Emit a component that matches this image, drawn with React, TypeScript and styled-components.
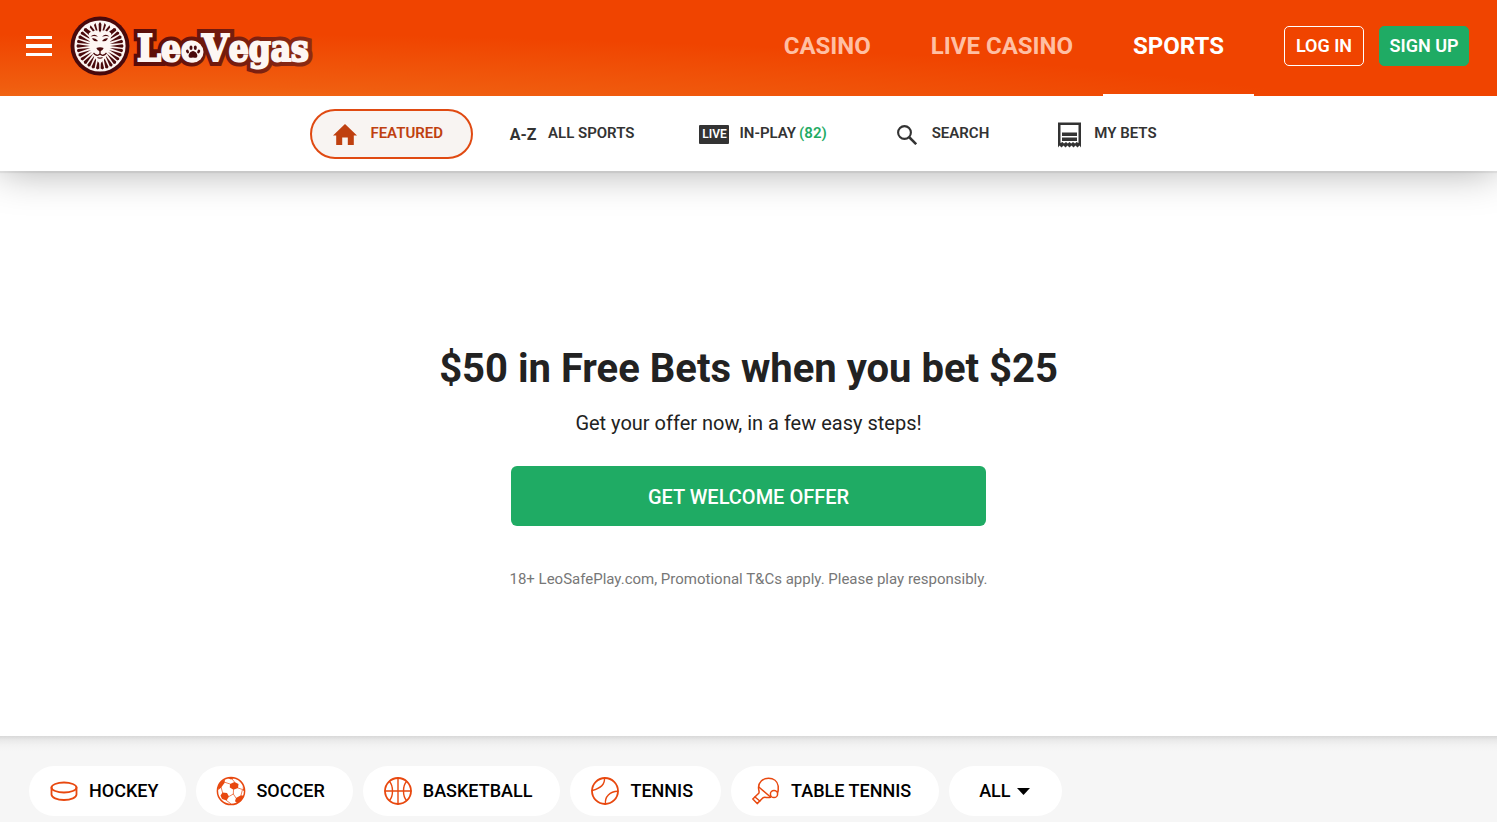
import React from "react";
import styled, { createGlobalStyle } from "styled-components";

const GlobalStyle = createGlobalStyle`
  *, *::before, *::after { box-sizing: border-box; }
  body {
    margin: 0;
    background: #f6f6f6;
    color: #222;
    font-family: Roboto, "Liberation Sans", sans-serif;
  }
  button { font-family: inherit; cursor: pointer; }
  a { color: inherit; text-decoration: none; }
  svg { display: block; flex: none; }
`;

const Header = styled.header`
  display: flex;
  align-items: stretch;
  height: 96px;
  padding: 0 28px 0 26px;
  background:
    radial-gradient(ellipse 85% 110% at 10% 145%, #f48a26 0%, rgba(240, 98, 18, 0.85) 50%, rgba(240, 68, 0, 0) 100%),
    #f04400;
`;

const Brand = styled.div`
  display: flex;
  align-items: center;
  gap: 18px;
  margin-right: auto;
  padding-bottom: 4px;
`;

const MenuButton = styled.button`
  padding: 0;
  border: 0;
  background: none;
  color: #fff;
`;

const MainNav = styled.nav`
  display: flex;
`;

const MainLink = styled.a<{ $active?: boolean }>`
  display: flex;
  align-items: center;
  padding: 0 30px 2px;
  border-bottom: 2px solid ${(p) => (p.$active ? "#fff" : "transparent")};
  color: ${(p) => (p.$active ? "#fff" : "#ffbfa3")};
  font-size: 24px;
  font-weight: 700;
`;

const Account = styled.div`
  display: flex;
  align-items: center;
  gap: 15px;
  margin-left: 30px;
  padding-bottom: 4px;
`;

const AccountButton = styled.button<{ $filled?: boolean }>`
  width: ${(p) => (p.$filled ? 90 : 80)}px;
  height: 40px;
  padding: 0 0 2px;
  border: 1px solid ${(p) => (p.$filled ? "#1fab64" : "#fff")};
  border-radius: 5px;
  background: ${(p) => (p.$filled ? "#1fab64" : "transparent")};
  color: #fff;
  font-size: 18px;
  font-weight: 600;
  white-space: nowrap;
`;

const SubNav = styled.nav`
  position: relative;
  display: flex;
  justify-content: center;
  align-items: center;
  gap: 15px;
  height: 75px;
  background: #fff;
  box-shadow: 0 2px 1px rgba(0, 0, 0, 0.06), 0 0 40px rgba(0, 0, 0, 0.34);
  clip-path: inset(0 0 -60px 0);
`;

const SubLink = styled.a<{ $active?: boolean }>`
  display: flex;
  align-items: center;
  gap: 10px;
  height: 50px;
  padding: 0 28px 0 18px;
  border: 2px solid ${(p) => (p.$active ? "#e04a12" : "transparent")};
  border-radius: 25px;
  background: ${(p) => (p.$active ? "#f8f4f2" : "transparent")};
  color: ${(p) => (p.$active ? "#bf4010" : "#333")};
  font-size: 15px;
  font-weight: 600;
`;

const SubLabel = styled.span`
  padding-bottom: 2px;
`;

const Count = styled.span`
  margin-left: 3px;
  color: #1fab64;
`;

const IconBox = styled.span`
  display: flex;
  align-items: center;
  justify-content: center;
  width: 30px;
  padding-top: 2px;
`;

const TextIcon = styled.span`
  font-size: 16px;
  font-weight: 700;
  line-height: 20px;
  white-space: nowrap;
`;

const LiveIcon = styled.span`
  width: 30px;
  border-radius: 1px;
  background: #333;
  color: #fff;
  font-size: 12px;
  font-weight: 600;
  line-height: 19px;
  text-align: center;
`;

const Hero = styled.section`
  display: flex;
  flex-direction: column;
  align-items: center;
  padding: 174px 20px 147px;
  background: #fff;
  text-align: center;
`;

const Title = styled.h1`
  margin: 0;
  font-size: 40px;
  font-weight: 700;
  line-height: 48px;
`;

const Subtitle = styled.p`
  margin: 18px 0 31px;
  font-size: 20px;
  line-height: 24px;
`;

const OfferButton = styled.button`
  width: 100%;
  max-width: 475px;
  height: 60px;
  padding: 2px 0 0;
  border: 0;
  border-radius: 6px;
  background: #1fab64;
  color: #fff;
  font-size: 20px;
  font-weight: 500;
`;

const Terms = styled.p`
  margin: 43px 0 0;
  color: #777;
  font-size: 15px;
  line-height: 20px;
`;

const SportsBar = styled.section`
  display: flex;
  gap: 10px;
  padding: 30px 29px 6px;
  background: linear-gradient(#d8d8d8, #e9e9e9 4px, #f2f2f2 9px, #f6f6f6 15px);
`;

const SportPill = styled.a`
  display: flex;
  align-items: center;
  gap: 10px;
  height: 50px;
  padding: 0 28px 0 20px;
  border-radius: 25px;
  background: #fff;
  color: #000;
  font-size: 18px;
  font-weight: 500;
`;

const PillLabel = styled.span`
  padding-bottom: 2px;
`;

const AllButton = styled.button`
  display: flex;
  align-items: center;
  gap: 6px;
  height: 50px;
  padding: 0 32px 0 30px;
  border: 0;
  border-radius: 25px;
  background: #fff;
  color: #000;
  font-size: 18px;
  font-weight: 500;
`;

const DARK = "#4a0a0c";
const CREAM = "#fdf6f3";

/* Mane rays all around the face; the crown above the forehead is drawn separately. */
const RAYS = Array.from({ length: 30 }, (_, i) => i * 12 + 6)
  .filter((deg) => deg > 40 && deg < 320)
  .map((deg) => {
    const a = deg * (Math.PI / 180);
    const at = (r: number, off: number) =>
      `${(30 + r * Math.sin(a + off)).toFixed(2)},${(30 - r * Math.cos(a + off)).toFixed(2)}`;
    return `${at(10, 0)} ${at(22.6, -0.075)} ${at(23.6, 0)} ${at(22.6, 0.075)}`;
  });

function Logo() {
  return (
    <svg width="246" height="64" viewBox="0 0 246 64" role="img" aria-label="LeoVegas">
      <defs>
        <linearGradient id="outline" x1="0" x2="1">
          <stop offset="0" stopColor="#5a0c08" />
          <stop offset="1" stopColor="#8c2a14" />
        </linearGradient>
      </defs>
      <g transform="translate(0 2)">
        <circle cx="30" cy="30" r="29.500" fill={DARK} />
        <circle cx="30" cy="30" r="25.600" fill={CREAM} />
        {RAYS.map((points) => (
          <polygon key={points} points={points} fill={DARK} />
        ))}
        <path
          d="M18.800 17 L22 14 L26 15.500 H34 L38 14 L41.200 17 L40.500 24 L39 29 L38 36 L34.500 43 L30 48 L25.500 43 L22 36 L21 29 L19.500 24 Z"
          fill={CREAM}
        />
        <g fill={DARK}>
          <path d="M28.900 14.500 L28.600 8 L30 6 L31.400 8 L31.100 14.500 L30 16.500 Z" />
          <path d="M25.900 14.500 L24 9 L25.500 7 L27.500 14.500 Z" />
          <path d="M34.100 14.500 L36 9 L34.500 7 L32.500 14.500 Z" />
          <path d="M23 15.500 L19.800 11.500 L20.500 9.200 L24.800 14.500 Z" />
          <path d="M37 15.500 L40.200 11.500 L39.500 9.200 L35.200 14.500 Z" />
          <path d="M19.500 17 L15.500 14 L16 12.200 L20.800 15.500 Z" />
          <path d="M40.500 17 L44.500 14 L44 12.200 L39.200 15.500 Z" />
          <path d="M20.500 20.500 Q24.500 17 28 20.800 Q24.500 19.300 20.500 20.500 Z" />
          <path d="M39.500 20.500 Q35.500 17 32 20.800 Q35.500 19.300 39.500 20.500 Z" />
          <path d="M21.800 22.500 Q25.500 21.300 28 25 Q24 26 21.800 22.500 Z" />
          <path d="M38.200 22.500 Q34.500 21.300 32 25 Q36 26 38.200 22.500 Z" />
          <path d="M26.300 32 Q30 30.600 33.700 32 Q32.500 35 30 35.600 Q27.500 35 26.300 32 Z" />
        </g>
        <path
          d="M30 35 V38 Q27 41 23.500 37 M30 38 Q33 41 36.500 37 M27.500 41.500 Q30 42.800 32.500 41.500"
          fill="none"
          stroke={DARK}
          strokeWidth="1.300"
        />
      </g>
      <g
        fontFamily="'DejaVu Serif Condensed', 'DejaVu Serif', 'Liberation Serif', serif"
        fontWeight="700"
        fontSize="35"
        strokeLinejoin="miter"
        strokeMiterlimit="2"
      >
        <text x="67" y="47" fill="url(#outline)" stroke="url(#outline)" strokeWidth="10">
          <tspan fontSize="38">L</tspan>eo<tspan fontSize="38">V</tspan>egas
        </text>
        <text aria-hidden="true" x="67" y="47" fill={CREAM} stroke={CREAM} strokeWidth="2">
          <tspan fontSize="38">L</tspan>eo<tspan fontSize="38">V</tspan>egas
        </text>
      </g>
      <circle cx="123" cy="38" r="10.500" fill={CREAM} />
      <g fill={DARK} transform="translate(-0.500 0)">
        <path d="M123.500 37 C126 37 129 41 127.500 43 C126.500 44.500 125 43.500 123.500 43.500 C122 43.500 120.500 44.500 119.500 43 C118 41 121 37 123.500 37 Z" />
        <ellipse cx="118" cy="37.500" rx="1.400" ry="2" transform="rotate(-25 118 37.500)" />
        <ellipse cx="121.500" cy="33.800" rx="1.500" ry="2.300" />
        <ellipse cx="125.800" cy="33.800" rx="1.500" ry="2.300" />
        <ellipse cx="129.200" cy="37.500" rx="1.400" ry="2" transform="rotate(25 129.200 37.500)" />
      </g>
    </svg>
  );
}

const MenuIcon = () => (
  <svg width="26" height="20" viewBox="0 0 26 20" fill="currentColor" aria-hidden="true">
    <path d="M0 0h26v3H0zM0 8h26v4H0zM0 17h26v3H0z" />
  </svg>
);

const HomeIcon = () => (
  <svg width="24" height="21" viewBox="0 0 24 21" fill="currentColor" aria-hidden="true">
    <path d="M12 0 L24 11.500 H20.800 V21 H14.800 V13.500 H9.200 V21 H3.200 V11.500 H0 Z" />
  </svg>
);

const SearchIcon = () => (
  <svg width="20" height="20" viewBox="0 0 20 20" fill="none" stroke="#333" strokeWidth="2.100" aria-hidden="true">
    <circle cx="7.500" cy="7.500" r="6.400" />
    <path d="M12 12 L19.200 19.200" strokeWidth="2.500" />
  </svg>
);

const BetsIcon = () => (
  <svg width="23" height="26" viewBox="0 0 23 26" fill="#333" aria-hidden="true">
    <path
      fillRule="evenodd"
      d="M0 0.500 H23 V25.500 L21.500 23.500 L19.500 25.500 L17.500 23.500 L15.500 25.500 L13.500 23.500 L11.500 25.500 L9.500 23.500 L7.500 25.500 L5.500 23.500 L3.500 25.500 L1.500 23.500 L0 25.500 Z M2.500 3 V21 L4.500 20 L6 21.500 L8 20 L9.800 21.500 L11.500 20 L13.200 21.500 L15 20 L17 21.500 L18.500 20 L20.500 21 V3 Z"
    />
    <path d="M4 10.500h15v3.500H4zM4 15.500h15v3.500H4z" />
  </svg>
);

const SportSvg = ({ children }: { children: React.ReactNode }) => (
  <svg
    width="30"
    height="30"
    viewBox="0 0 30 30"
    fill="none"
    stroke="#e8480f"
    strokeWidth="1.800"
    strokeLinejoin="round"
    strokeLinecap="round"
    aria-hidden="true"
  >
    {children}
  </svg>
);

const HockeyIcon = () => (
  <SportSvg>
    <ellipse cx="15" cy="11.500" rx="12.500" ry="5" />
    <path d="M2.500 11.500 V18.500 C2.500 21.500 8 24 15 24 S27.500 21.500 27.500 18.500 V11.500" />
  </SportSvg>
);

const SoccerIcon = () => (
  <SportSvg>
    <circle cx="15" cy="15" r="13.600" strokeWidth="1.500" />
    <g fill="#e8480f" stroke="none">
      <path d="M14 8 L18.500 6 L22.500 8 L22 12 L17.500 13.700 L13.800 11.500 Z" />
      <path d="M6.500 16.500 L11 17 L13 20.500 L10.500 24.500 L6 23 L4.500 19.500 Z" />
      <path d="M20 22 L25 19.200 L27.700 19.700 C26.500 23.500 24.500 25.500 21.500 27.200 L19 25.300 Z" />
      <path d="M2 11 C3.500 7.500 5.500 5 9 3.200 L8.500 7 L5.200 11.500 L2.300 14 Z" />
      <path d="M11.500 2 C13.500 1.300 16.500 1.300 18.500 2 L15 3.500 Z" />
      <path d="M26.800 10 L28.500 15 L26.800 14.500 Z" />
    </g>
    <path
      d="M8 6 L14 8 M17.500 13.700 L17.300 18 L20 22 M17.300 18 L13 20.500 M5.200 11.500 L6.500 16.500 M22 12 L26.500 13.500 L25 19.200 M10.500 24.500 L15 27.800 M18.500 6 L16 3"
      strokeWidth="0.700"
    />
  </SportSvg>
);

const BasketballIcon = () => (
  <SportSvg>
    <circle cx="15" cy="15" r="13" />
    <path
      d="M15 2 V28 M2 15 H28 M6.500 5.500 C8.700 8 9.500 11.500 9.500 15 S8.700 22 6.500 24.500 M23.500 5.500 C21.300 8 20.500 11.500 20.500 15 S21.300 22 23.500 24.500"
      strokeWidth="1.400"
    />
  </SportSvg>
);

const TennisIcon = () => (
  <SportSvg>
    <circle cx="15" cy="15" r="13" />
    <path d="M14.500 2 C15 8 10 12.500 2.200 14.500 M15.500 28 C14.500 20.500 20 15.500 27.800 15.200" strokeWidth="1.400" />
  </SportSvg>
);

const TableTennisIcon = () => (
  <SportSvg>
    <path
      d="M23 20.800 C25 19 27.200 18 27.200 14 V10 C26.500 5 22.500 2.200 17.500 2.200 C11.500 2.200 7.500 6.500 7.500 11.500 C7.500 15 9 16 7.500 17.500 L1.800 23 L6.200 27.600 L12 21.800 C14 20.200 16 22.500 19.500 21.200"
      strokeWidth="1.500"
    />
    <path d="M7.800 11 L19.500 21 M4 21 L8.800 25" strokeWidth="1.500" />
    <circle cx="23" cy="18" r="3.600" fill="#fff" strokeWidth="1.500" />
  </SportSvg>
);

const CaretIcon = () => (
  <svg width="13" height="7" viewBox="0 0 13 7" fill="#000" aria-hidden="true">
    <path d="M0 0 H13 L6.500 7 Z" />
  </svg>
);

const SPORTS = [
  { name: "HOCKEY", Icon: HockeyIcon },
  { name: "SOCCER", Icon: SoccerIcon },
  { name: "BASKETBALL", Icon: BasketballIcon },
  { name: "TENNIS", Icon: TennisIcon },
  { name: "TABLE TENNIS", Icon: TableTennisIcon },
];

export default function App() {
  return (
    <>
      <GlobalStyle />
      <Header>
        <Brand>
          <MenuButton type="button" aria-label="Menu">
            <MenuIcon />
          </MenuButton>
          <a href="#home">
            <Logo />
          </a>
        </Brand>
        <MainNav>
          <MainLink href="#casino">CASINO</MainLink>
          <MainLink href="#live-casino">LIVE CASINO</MainLink>
          <MainLink href="#sports" $active>
            SPORTS
          </MainLink>
        </MainNav>
        <Account>
          <AccountButton type="button">LOG IN</AccountButton>
          <AccountButton type="button" $filled>
            SIGN UP
          </AccountButton>
        </Account>
      </Header>
      <SubNav>
        <SubLink href="#featured" $active>
          <IconBox>
            <HomeIcon />
          </IconBox>
          <SubLabel>FEATURED</SubLabel>
        </SubLink>
        <SubLink href="#all-sports">
          <IconBox>
            <TextIcon>A-Z</TextIcon>
          </IconBox>
          <SubLabel>ALL SPORTS</SubLabel>
        </SubLink>
        <SubLink href="#in-play">
          <IconBox>
            <LiveIcon>LIVE</LiveIcon>
          </IconBox>
          <SubLabel>
            IN-PLAY<Count>(82)</Count>
          </SubLabel>
        </SubLink>
        <SubLink href="#search">
          <IconBox>
            <SearchIcon />
          </IconBox>
          <SubLabel>SEARCH</SubLabel>
        </SubLink>
        <SubLink href="#my-bets">
          <IconBox>
            <BetsIcon />
          </IconBox>
          <SubLabel>MY BETS</SubLabel>
        </SubLink>
      </SubNav>
      <main>
        <Hero>
          <Title>$50 in Free Bets when you bet $25</Title>
          <Subtitle>Get your offer now, in a few easy steps!</Subtitle>
          <OfferButton type="button">GET WELCOME OFFER</OfferButton>
          <Terms>18+ LeoSafePlay.com, Promotional T&amp;Cs apply. Please play responsibly.</Terms>
        </Hero>
        <SportsBar>
          {SPORTS.map(({ name, Icon }) => (
            <SportPill key={name} href={`#${name.toLowerCase().replace(" ", "-")}`}>
              <Icon />
              <PillLabel>{name}</PillLabel>
            </SportPill>
          ))}
          <AllButton type="button">
            <PillLabel>ALL</PillLabel>
            <CaretIcon />
          </AllButton>
        </SportsBar>
      </main>
    </>
  );
}
